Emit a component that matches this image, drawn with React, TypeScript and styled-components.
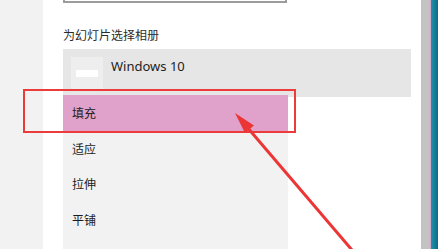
import React from "react";
import styled, { createGlobalStyle } from "styled-components";

const GlobalStyle = createGlobalStyle`
  html, body {
    margin: 0;
    padding: 0;
    overflow: hidden;
    background: #fff;
  }
  #root {
    width: 438px;
    height: 249px;
    overflow: hidden;
  }
`;

const fitModes = ["填充", "适应", "拉伸", "平铺", "居中", "跨区"];

const Screen = styled.div`
  position: relative;
  display: flex;
  width: 438px;
  height: 249px;
  overflow: hidden;
  font-family: "Noto Sans", "Noto Sans CJK SC", sans-serif;
  color: #1b1b1b;
`;

const NavStrip = styled.div`
  width: 43px;
  flex: none;
  background: #f2f2f2;
`;

const Panel = styled.div`
  position: relative;
  flex: 1;
  display: flex;
  flex-direction: column;
  padding-left: 20px;
  background: #fff;
`;

const TextBox = styled.div`
  width: 224px;
  height: 31px;
  margin-top: -28px;
  box-sizing: border-box;
  border: 2px solid #9c9c9c;
  background: #fff;
`;

const Label = styled.div`
  margin-top: 24px;
  height: 16px;
  line-height: 16px;
  font-size: 12px;
  font-family: "Noto Sans CJK SC", sans-serif;
  color: #2b2b2b;
`;

const AlbumRow = styled.div`
  margin-top: 6px;
  width: 348px;
  height: 48px;
  box-sizing: border-box;
  padding: 8px;
  display: flex;
  align-items: flex-start;
  gap: 8px;
  background: #e6e6e6;
`;

const Thumb = styled.div`
  width: 32px;
  height: 32px;
  display: flex;
  align-items: center;
  justify-content: center;
  background: #eeeeee;
`;

const ThumbBar = styled.div`
  width: 22px;
  height: 7px;
  background: #fff;
`;

const AlbumName = styled.div`
  font-size: 13px;
  line-height: 18px;
  color: #1e1e1e;
`;

const Menu = styled.div`
  position: absolute;
  left: 20px;
  top: 95px;
  width: 225px;
  background: #f2f2f2;
`;

const MenuItem = styled.div<{ selected?: boolean }>`
  height: 35.5px;
  display: flex;
  align-items: center;
  padding-left: 9px;
  font-size: 12px;
  font-family: "Noto Sans CJK SC", sans-serif;
  color: #1c1c1c;
  background: ${(p) => (p.selected ? "#e0a2ca" : "transparent")};
`;

const Scrollbar = styled.div`
  width: 9px;
  flex: none;
  background: #c3c3c3;
`;

const Edge = styled.div`
  width: 1px;
  flex: none;
  background: #c8a7c4;
`;

const Desktop = styled.div`
  flex: none;
  width: 7px;
  background: linear-gradient(90deg, #1f93ab 0%, #0c6a88 100%);
`;

const Highlight = styled.div`
  position: absolute;
  left: 23px;
  top: 89px;
  width: 273px;
  height: 44px;
  box-sizing: border-box;
  border: 2px solid #ec3b3b;
  pointer-events: none;
`;

const ArrowLayer = styled.svg`
  position: absolute;
  left: 0;
  top: 0;
  pointer-events: none;
`;

export default function App() {
  return (
    <>
      <GlobalStyle />
      <Screen>
        <NavStrip />
        <Panel>
          <TextBox />
          <Label>为幻灯片选择相册</Label>
          <AlbumRow>
            <Thumb>
              <ThumbBar />
            </Thumb>
            <AlbumName>Windows 10</AlbumName>
          </AlbumRow>
          <Menu>
            {fitModes.map((m, i) => (
              <MenuItem key={m} selected={i === 0}>
                {m}
              </MenuItem>
            ))}
          </Menu>
        </Panel>
        <Scrollbar />
        <Edge />
        <Desktop />
        <Highlight />
        <ArrowLayer width="438" height="249" viewBox="0 0 438 249">
          <line x1="247" y1="127" x2="352" y2="250" stroke="#ec3535" strokeWidth="3" />
          <polygon points="235,113 254,125.5 245,133" fill="#ec3535" />
        </ArrowLayer>
      </Screen>
    </>
  );
}
